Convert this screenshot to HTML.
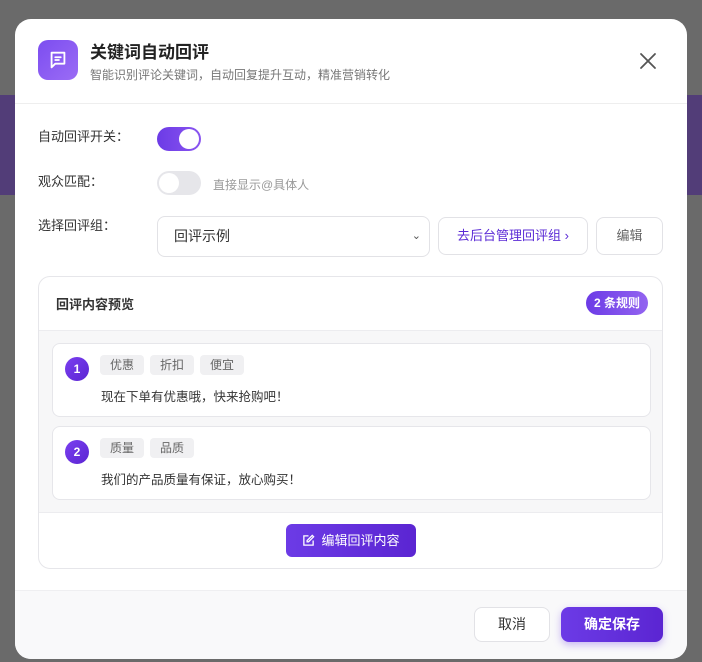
<!DOCTYPE html>
<html><head><meta charset="utf-8"><style>
*{box-sizing:border-box;margin:0;padding:0}
body{width:702px;height:662px;overflow:hidden;background:#6a6a6a;font-family:"Liberation Sans","Noto Sans CJK SC",sans-serif;position:relative}
.band{position:absolute;top:95px;height:100px;width:702px;background:#523d78}
.m{position:absolute;left:15px;top:19px;width:672px;height:640px;background:#fff;border-radius:16px;overflow:hidden}
.a{position:absolute}
.ic{left:23px;top:21px;width:40px;height:40px;border-radius:10px;background:linear-gradient(135deg,#7c4df0,#9b6cf5);display:flex;align-items:center;justify-content:center}
.lbl{font-size:13px;color:#333}
.tg{width:44px;height:24px;border-radius:12px}
.tag{display:inline-block;height:20px;line-height:20px;padding:0 10px;background:#f0f0f2;border-radius:4px;font-size:12px;color:#666;margin-right:6px}
.item{left:13px;width:599px;background:#fff;border:1px solid #e6e6ea;border-radius:8px}
.num{left:12px;top:13px;width:24px;height:24px;border-radius:12px;background:linear-gradient(135deg,#7a3ff0,#5b25d2);color:#fff;font-size:12px;font-weight:bold;text-align:center;line-height:24px}
.btn{border:1px solid #e2e2e6;border-radius:8px;background:#fff;text-align:center;font-size:13px}
</style></head><body>
<div class="band"></div>
<div class="m">
<div class="a ic"><svg width="22" height="22" viewBox="0 0 24 24" fill="none" stroke="#fff" stroke-width="2" stroke-linejoin="round"><path d="M5 4h14v12H9l-4 4z"/><path d="M9 9h6M9 12h4" stroke-linecap="round"/></svg></div>
<div class="a" style="left:75px;top:19px;font-size:17px;font-weight:bold;color:#222">关键词自动回评</div>
<div class="a" style="left:75px;top:47px;font-size:12px;color:#777">智能识别评论关键词，自动回复提升互动，精准营销转化</div>
<svg class="a" style="left:624px;top:33px" width="18" height="18" viewBox="0 0 18 18" stroke="#555" stroke-width="1.8" stroke-linecap="round"><path d="M2 2L16 16M16 2L2 16"/></svg>
<div class="a" style="left:0;top:84px;width:672px;height:1px;background:#eee"></div>

<div class="a lbl" style="left:23px;top:107px">自动回评开关：</div>
<div class="a tg" style="left:142px;top:108px;background:linear-gradient(90deg,#6c3be6,#8a55f0)"><div class="a" style="left:22px;top:2px;width:20px;height:20px;border-radius:10px;background:#fff"></div></div>
<div class="a lbl" style="left:23px;top:152px">观众匹配：</div>
<div class="a tg" style="left:142px;top:152px;background:#e6e6ea"><div class="a" style="left:2px;top:2px;width:20px;height:20px;border-radius:10px;background:#fff"></div></div>
<div class="a" style="left:198px;top:157px;font-size:12px;color:#999">直接显示@具体人</div>
<div class="a lbl" style="left:23px;top:196px">选择回评组：</div>
<div class="a btn" style="left:142px;top:197px;width:273px;height:41px;text-align:left;padding-left:16px;line-height:39px;color:#333;font-size:14px">回评示例<span style="position:absolute;right:8px;top:0;font-size:11px;color:#555">&#8964;</span></div>
<div class="a btn" style="left:423px;top:198px;width:150px;height:38px;line-height:36px;color:#5b2bd6">去后台管理回评组 ›</div>
<div class="a btn" style="left:581px;top:198px;width:67px;height:38px;line-height:36px;color:#666">编辑</div>

<div class="a" style="left:23px;top:257px;width:625px;height:293px;border:1px solid #e6e6ea;border-radius:12px;overflow:hidden">
 <div class="a" style="left:17px;top:17px;font-size:13px;font-weight:bold;color:#333">回评内容预览</div>
 <div class="a" style="left:547px;top:14px;width:62px;height:24px;border-radius:12px;background:linear-gradient(90deg,#6c3be6,#9364f0);color:#fff;font-size:12px;font-weight:bold;text-align:center;line-height:24px">2 条规则</div>
 <div class="a" style="left:0;top:53px;width:625px;height:183px;background:#f7f7f8;border-top:1px solid #ececef;border-bottom:1px solid #ececef">
  <div class="a item" style="top:12px;height:74px"><div class="a num">1</div>
   <div class="a" style="left:47px;top:11px"><span class="tag">优惠</span><span class="tag">折扣</span><span class="tag">便宜</span></div>
   <div class="a" style="left:48px;top:42px;font-size:12.5px;color:#333">现在下单有优惠哦，快来抢购吧！</div></div>
  <div class="a item" style="top:95px;height:74px"><div class="a num">2</div>
   <div class="a" style="left:47px;top:11px"><span class="tag">质量</span><span class="tag">品质</span></div>
   <div class="a" style="left:48px;top:42px;font-size:12.5px;color:#333">我们的产品质量有保证，放心购买！</div></div>
 </div>
 <div class="a" style="left:247px;top:247px;width:130px;height:33px;border-radius:6px;background:linear-gradient(90deg,#6c3be6,#5b25d2);color:#fff;font-size:13px;line-height:33px;text-align:center"><svg width="13" height="13" viewBox="0 0 14 14" fill="none" stroke="#fff" stroke-width="1.4" style="vertical-align:-2px;margin-right:6px"><path d="M7 2H2v10h10V7"/><path d="M11 1.5l1.5 1.5L7 8.5H5.5V7z"/></svg>编辑回评内容</div>
</div>

<div class="a" style="left:0;top:571px;width:672px;height:69px;background:#f9f9fa;border-top:1px solid #efeff1"></div>
<div class="a btn" style="left:459px;top:588px;width:76px;height:35px;line-height:33px;color:#333;font-size:14px">取消</div>
<div class="a" style="left:546px;top:588px;width:102px;height:35px;border-radius:8px;background:linear-gradient(90deg,#6c3be6,#5b25d2);color:#fff;font-size:14px;font-weight:bold;text-align:center;line-height:35px;box-shadow:0 3px 8px rgba(108,59,230,.35)">确定保存</div>
</div>
</body></html>
